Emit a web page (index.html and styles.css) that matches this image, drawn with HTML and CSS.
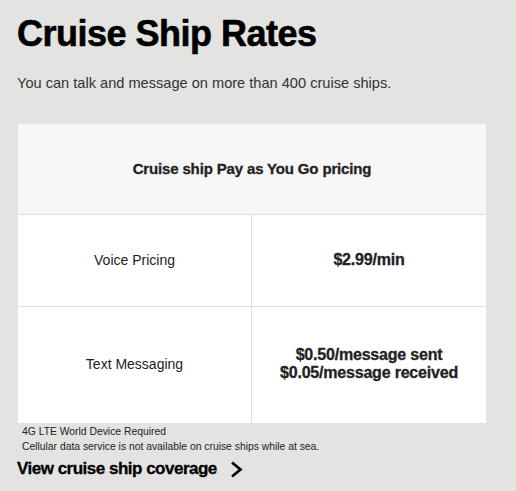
FILE: index.html
```html
<!DOCTYPE html>
<html>
<head>
<meta charset="utf-8">
<link rel="stylesheet" href="styles.css">
</head>
<body>
<main class="page">
  <h1 class="title">Cruise Ship Rates</h1>
  <p class="intro">You can talk and message on more than 400 cruise ships.</p>
  <div class="rates">
    <div class="rates-head">Cruise ship Pay as You Go pricing</div>
    <div class="rates-row row-voice">
      <div class="cell label">Voice Pricing</div>
      <div class="cell value">$2.99/min</div>
    </div>
    <div class="rates-row row-text">
      <div class="cell label">Text Messaging</div>
      <div class="cell value">$0.50/message sent<br>$0.05/message received</div>
    </div>
  </div>
  <div class="notes">
    <p>4G LTE World Device Required</p>
    <p>Cellular data service is not available on cruise ships while at sea.</p>
  </div>
  <a class="more" href="#">View cruise ship coverage
    <svg class="chev" width="13" height="17" viewBox="0 0 13 17"><path d="M2 1.5 L10.5 8.5 L2 15.5" fill="none" stroke="#000" stroke-width="2.7"/></svg>
  </a>
</main>
</body>
</html>
```
FILE: styles.css
```css
html, body {
  margin: 0;
  padding: 0;
  background: #e3e3e1;
}
body {
  font-family: "Liberation Sans", Arial, sans-serif;
  color: #000;
  width: 516px;
  height: 491px;
  overflow: hidden;
}
.page {
  padding: 16px 30px 0 17px;
}
.title {
  margin: 0;
  font-size: 36px;
  line-height: 36px;
  font-weight: 700;
  letter-spacing: -0.5px;
  -webkit-text-stroke: 0.6px #000;
}
.intro {
  margin: 22px 0 0;
  font-size: 14.6px;
  line-height: 18px;
  color: #333;
}
.rates {
  margin-top: 32px;
  margin-left: 1px;
  width: 468px;
  background: #fff;
}
.rates-head {
  height: 89px;
  padding-bottom: 1px;
  background: #f6f6f6;
  border-bottom: 1px solid #dedede;
  display: flex;
  align-items: center;
  justify-content: center;
  font-size: 15px;
  font-weight: 700;
  color: #222;
  letter-spacing: -0.15px;
  -webkit-text-stroke: 0.3px #222;
}
.rates-row {
  display: grid;
  grid-template-columns: 234px 1fr;
}
.row-voice {
  height: 91px;
  border-bottom: 1px solid #dedede;
}
.row-text {
  height: 116px;
}
.cell {
  display: flex;
  align-items: center;
  justify-content: center;
  text-align: center;
  font-size: 14px;
  line-height: 18px;
  color: #222;
  padding-bottom: 2px;
}
.cell.label {
  border-right: 1px solid #dedede;
}
.cell.value {
  font-size: 16px;
  font-weight: 700;
  letter-spacing: -0.2px;
  -webkit-text-stroke: 0.3px #222;
}
.notes {
  padding: 1px 0 0 5px;
}
.notes p {
  margin: 0;
  font-size: 10.35px;
  line-height: 15px;
  color: #222;
}
.more {
  display: inline-flex;
  align-items: center;
  gap: 13px;
  margin-top: 5px;
  font-size: 17px;
  font-weight: 700;
  color: #000;
  text-decoration: none;
  letter-spacing: -0.5px;
  -webkit-text-stroke: 0.3px #000;
}
.chev {
  display: block;
}
```
